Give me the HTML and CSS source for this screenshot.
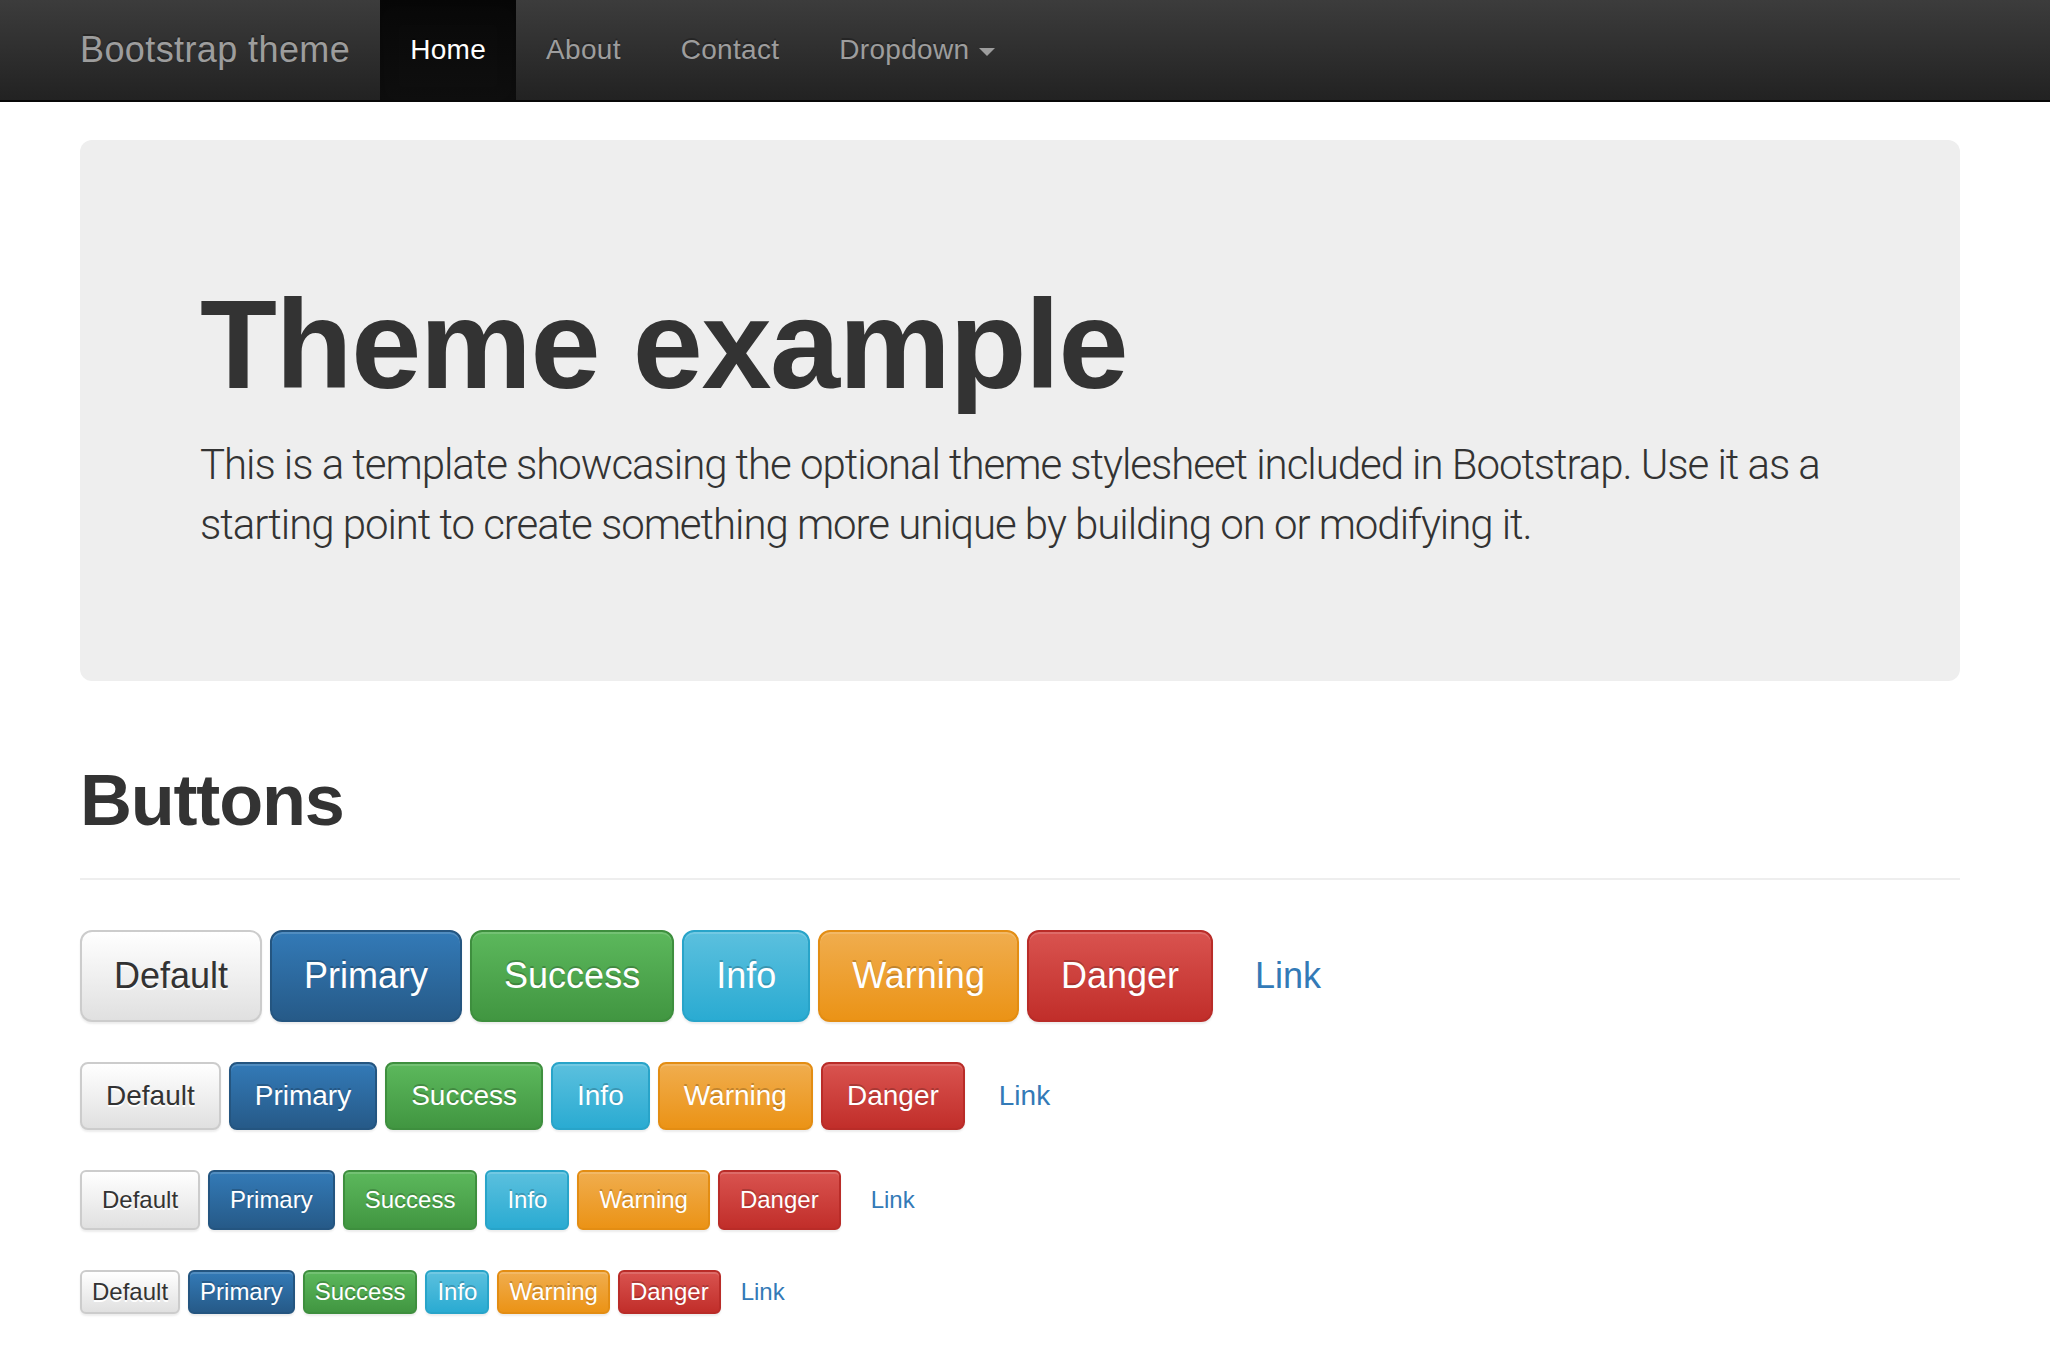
FILE: index.html
```html
<!DOCTYPE html>
<html lang="en">
<head>
<meta charset="utf-8">
<title>Theme Template for Bootstrap</title>
<link rel="stylesheet" href="styles.css">
</head>
<body>
<nav class="navbar">
  <div class="container navbar-inner">
    <a class="navbar-brand" href="#">Bootstrap theme</a>
    <ul class="nav">
      <li class="active"><a href="#">Home</a></li>
      <li><a href="#about">About</a></li>
      <li><a href="#contact">Contact</a></li>
      <li><a href="#">Dropdown <span class="caret"></span></a></li>
    </ul>
  </div>
</nav>

<main class="container showcase">
  <div class="jumbotron">
    <h1>Theme example</h1>
    <p>This is a template showcasing the optional theme stylesheet included in Bootstrap. Use it as a starting point to create something more unique by building on or modifying it.</p>
  </div>

  <div class="page-header">
    <h1>Buttons</h1>
  </div>

  <div class="btn-row">
    <button type="button" class="btn btn-lg btn-default">Default</button>
    <button type="button" class="btn btn-lg btn-primary">Primary</button>
    <button type="button" class="btn btn-lg btn-success">Success</button>
    <button type="button" class="btn btn-lg btn-info">Info</button>
    <button type="button" class="btn btn-lg btn-warning">Warning</button>
    <button type="button" class="btn btn-lg btn-danger">Danger</button>
    <button type="button" class="btn btn-lg btn-link">Link</button>
  </div>
  <div class="btn-row">
    <button type="button" class="btn btn-default">Default</button>
    <button type="button" class="btn btn-primary">Primary</button>
    <button type="button" class="btn btn-success">Success</button>
    <button type="button" class="btn btn-info">Info</button>
    <button type="button" class="btn btn-warning">Warning</button>
    <button type="button" class="btn btn-danger">Danger</button>
    <button type="button" class="btn btn-link">Link</button>
  </div>
  <div class="btn-row">
    <button type="button" class="btn btn-sm btn-default">Default</button>
    <button type="button" class="btn btn-sm btn-primary">Primary</button>
    <button type="button" class="btn btn-sm btn-success">Success</button>
    <button type="button" class="btn btn-sm btn-info">Info</button>
    <button type="button" class="btn btn-sm btn-warning">Warning</button>
    <button type="button" class="btn btn-sm btn-danger">Danger</button>
    <button type="button" class="btn btn-sm btn-link">Link</button>
  </div>
  <div class="btn-row">
    <button type="button" class="btn btn-xs btn-default">Default</button>
    <button type="button" class="btn btn-xs btn-primary">Primary</button>
    <button type="button" class="btn btn-xs btn-success">Success</button>
    <button type="button" class="btn btn-xs btn-info">Info</button>
    <button type="button" class="btn btn-xs btn-warning">Warning</button>
    <button type="button" class="btn btn-xs btn-danger">Danger</button>
    <button type="button" class="btn btn-xs btn-link">Link</button>
  </div>
</main>
</body>
</html>
```

FILE: styles.css
```css
* {
  box-sizing: border-box;
}

html, body {
  margin: 0;
  padding: 0;
  background: #fff;
}

body {
  font-family: "Liberation Sans", Arial, Helvetica, sans-serif;
  font-size: 28px;
  line-height: 40px;
  color: #333;
  overflow: hidden;
}

.container {
  width: 1880px;
  margin-left: 80px;
}

/* ---------- Navbar ---------- */
.navbar {
  height: 102px;
  background-image: linear-gradient(to bottom, #3c3c3c 0, #222 100%);
  border-bottom: 2px solid #080808;
}

.navbar-inner {
  display: flex;
  align-items: stretch;
  height: 100px;
}

.navbar-brand {
  display: block;
  margin-left: -30px;
  padding: 30px;
  height: 100px;
  font-size: 36px;
  line-height: 40px;
  letter-spacing: 0.4px;
  color: #9d9d9d;
  text-decoration: none;
  text-shadow: 0 -2px 0 rgba(0, 0, 0, .25);
}

.nav {
  display: flex;
  list-style: none;
  margin: 0;
  padding: 0;
}

.nav li a {
  display: block;
  padding: 30px;
  height: 100px;
  font-size: 28px;
  line-height: 40px;
  letter-spacing: 0.3px;
  color: #9d9d9d;
  text-decoration: none;
  text-shadow: 0 -2px 0 rgba(0, 0, 0, .25);
}

.nav li.active a {
  color: #fff;
  background-image: linear-gradient(to bottom, #080808 0, #0f0f0f 100%);
  box-shadow: inset 0 6px 18px rgba(0, 0, 0, .25);
}

.caret {
  display: inline-block;
  width: 0;
  height: 0;
  margin-left: 2px;
  vertical-align: middle;
  border-top: 8px solid;
  border-left: 8px solid transparent;
  border-right: 8px solid transparent;
}

/* ---------- Showcase ---------- */
.showcase {
  padding-top: 38px;
}

.jumbotron {
  background: #eee;
  border-radius: 12px;
  padding: 96px 120px;
}

.jumbotron h1 {
  margin: 40px 0 20px;
  font-size: 126px;
  line-height: 1.1;
  font-weight: 700;
  letter-spacing: -1.4px;
  color: #333;
}

.jumbotron p {
  margin: 0 0 30px;
  font-family: Roboto, "Liberation Sans", sans-serif;
  font-weight: 300;
  font-size: 42px;
  line-height: 60px;
  letter-spacing: -1.05px;
  color: #333;
}

.page-header {
  margin: 80px 0 40px;
  padding-bottom: 18px;
  border-bottom: 2px solid #eee;
}

.page-header h1 {
  margin: 0 0 20px;
  font-size: 72px;
  line-height: 1.1;
  font-weight: 700;
  letter-spacing: -1.2px;
  color: #333;
}

/* ---------- Buttons ---------- */
.btn-row {
  display: flex;
  align-items: center;
  gap: 8px;
  margin-bottom: 20px;
}

.btn {
  margin: 10px 0;
  font-family: "Liberation Sans", Arial, Helvetica, sans-serif;
  font-size: 28px;
  line-height: 40px;
  padding: 12px 24px;
  border: 2px solid transparent;
  border-radius: 8px;
  color: #fff;
  white-space: nowrap;
  cursor: pointer;
  text-shadow: 0 -2px 0 rgba(0, 0, 0, .2);
  box-shadow: inset 0 2px 0 rgba(255, 255, 255, .15), 0 2px 2px rgba(0, 0, 0, .075);
}

.btn-lg {
  font-size: 36px;
  line-height: 48px;
  padding: 20px 32px;
  border-radius: 12px;
}

.btn-sm {
  font-size: 24px;
  line-height: 36px;
  padding: 10px 20px;
  border-radius: 6px;
}

.btn-xs {
  font-size: 24px;
  line-height: 36px;
  padding: 2px 10px;
  border-radius: 6px;
}

.btn-default {
  color: #333;
  text-shadow: 0 2px 0 #fff;
  background-image: linear-gradient(to bottom, #fff 0, #e0e0e0 100%);
  border-color: #ccc;
}

.btn-primary {
  background-image: linear-gradient(to bottom, #337ab7 0, #265a88 100%);
  border-color: #245580;
}

.btn-success {
  background-image: linear-gradient(to bottom, #5cb85c 0, #419641 100%);
  border-color: #3e8f3e;
}

.btn-info {
  background-image: linear-gradient(to bottom, #5bc0de 0, #2aabd2 100%);
  border-color: #28a4c9;
}

.btn-warning {
  background-image: linear-gradient(to bottom, #f0ad4e 0, #eb9316 100%);
  border-color: #e38d13;
}

.btn-danger {
  background-image: linear-gradient(to bottom, #d9534f 0, #c12e2a 100%);
  border-color: #b92c28;
}

.btn-link {
  color: #337ab7;
  background: none;
  border-color: transparent;
  box-shadow: none;
  text-shadow: none;
}
```
